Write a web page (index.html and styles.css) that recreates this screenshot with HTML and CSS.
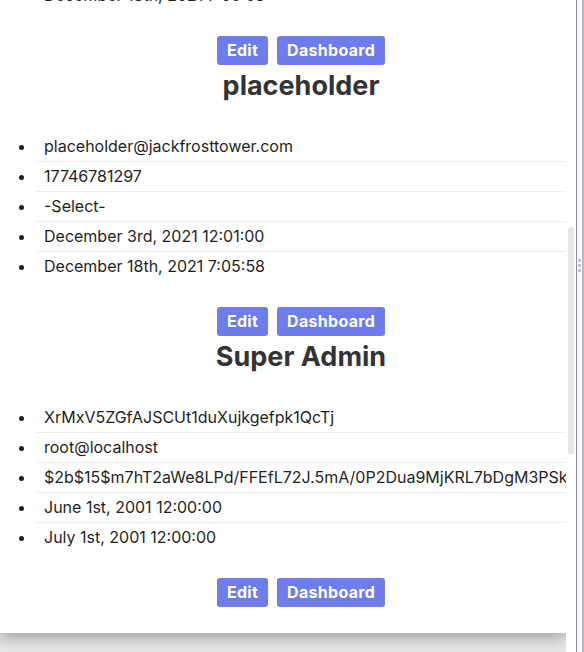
FILE: index.html
```html
<!DOCTYPE html>
<html lang="en">
<head>
<meta charset="utf-8">
<title>Users</title>
<link rel="stylesheet" href="styles.css">
</head>
<body>
<div class="viewer">
  <div class="frame" id="frame">
    <section class="card">
      <h1 class="card-title">Users</h1>

      <article class="user">
        <h2 class="user-name">admin</h2>
        <ul class="user-fields">
          <li>admin@jackfrosttower.com</li>
          <li>17746780001</li>
          <li>-Select-</li>
          <li>December 1st, 2021 09:00:00</li>
          <li>December 18th, 2021 6:58:12</li>
        </ul>
        <div class="actions">
          <a class="btn" href="#">Edit</a>
          <a class="btn" href="#">Dashboard</a>
        </div>
      </article>

      <article class="user">
        <h2 class="user-name">guest</h2>
        <ul class="user-fields">
          <li>guest@jackfrosttower.com</li>
          <li>17746781114</li>
          <li>-Select-</li>
          <li>December 2nd, 2021 10:15:00</li>
          <li>December 18th, 2021 7:05:58</li>
        </ul>
        <div class="actions">
          <a class="btn" href="#">Edit</a>
          <a class="btn" href="#">Dashboard</a>
        </div>
      </article>

      <article class="user" id="target">
        <h2 class="user-name">placeholder</h2>
        <ul class="user-fields">
          <li>placeholder@jackfrosttower.com</li>
          <li>17746781297</li>
          <li>-Select-</li>
          <li>December 3rd, 2021 12:01:00</li>
          <li>December 18th, 2021 7:05:58</li>
        </ul>
        <div class="actions">
          <a class="btn" href="#">Edit</a>
          <a class="btn" href="#">Dashboard</a>
        </div>
      </article>

      <article class="user">
        <h2 class="user-name">Super Admin</h2>
        <ul class="user-fields">
          <li>XrMxV5ZGfAJSCUt1duXujkgefpk1QcTj</li>
          <li>root@localhost</li>
          <li>$2b$15$m7hT2aWe8LPd/FFEfL72J.5mA/0P2Dua9MjKRL7bDgM3PSk4qWxZ9a</li>
          <li>June 1st, 2001 12:00:00</li>
          <li>July 1st, 2001 12:00:00</li>
        </ul>
        <div class="actions">
          <a class="btn" href="#">Edit</a>
          <a class="btn" href="#">Dashboard</a>
        </div>
      </article>
    </section>
  </div>
  <div class="scrollbar"><div class="scrollbar-thumb"></div></div>
  <div class="divider"></div>
  <div class="handle"><span></span><span></span><span></span></div>
  <div class="edge"></div>
</div>
<script src="script.js"></script>
</body>
</html>
```
FILE: styles.css
```css
* { box-sizing: border-box; }

html, body {
  margin: 0;
  padding: 0;
  height: 100%;
  background: #ffffff;
  font-family: Inter, "Open Sans", "DejaVu Sans", sans-serif;
}

.viewer {
  display: flex;
  width: 584px;
  height: 652px;
}

.frame {
  flex: 0 0 566px;
  width: 566px;
  height: 652px;
  overflow: hidden;
  background: #e8e8e8;
  padding: 24px 0 589px;
}

.scrollbar {
  flex: 0 0 10px;
  background: #ffffff;
  padding: 227px 2px 0;
}
.scrollbar-thumb {
  height: 227px;
  background: #e6e6e6;
  border-radius: 3px 3px 2px 2px;
}

.divider {
  flex: 0 0 1px;
  background: #8c87a2;
}

.handle {
  flex: 0 0 5px;
  background: #fbfbfb;
  display: flex;
  flex-direction: column;
  align-items: center;
  padding-top: 259px;
  gap: 2px;
}
.handle span {
  width: 3px;
  height: 3px;
  background: #bdbdbd;
  border-radius: 1px;
}

.edge {
  flex: 0 0 2px;
  background: #bab7bb;
}

.card {
  background: #ffffff;
  padding: 24px 0 26px 36px;
  box-shadow: 0 4px 16px rgba(0, 0, 0, 0.35);
}

.card-title {
  margin: 0 0 92px;
  font-size: 28px;
  line-height: 40px;
  text-align: center;
  color: #333333;
}

.user + .user {
  margin-top: 5px;
}

.user-name {
  margin: 0;
  font-size: 27px;
  line-height: 32px;
  font-weight: 700;
  color: #333333;
  text-align: center;
}

.user-fields {
  margin: 30px 0 26px;
  padding: 0;
  list-style: disc outside;
  color: #1f1f1f;
  font-size: 16px;
}

.user-fields li {
  line-height: 29px;
  padding-left: 8px;
  white-space: nowrap;
  border-bottom: 1px solid #ededed;
}
.user-fields li:last-child {
  border-bottom: none;
}

.actions {
  display: flex;
  justify-content: center;
  gap: 9px;
}

.btn {
  display: block;
  height: 29px;
  line-height: 29px;
  padding: 0 10px;
  background: #6e7cee;
  color: #ffffff;
  font-size: 16px;
  font-weight: 700;
  letter-spacing: 0.3px;
  text-decoration: none;
  border-radius: 3px;
}
```
FILE: script.js
```js
(function () {
  var frame = document.getElementById('frame');
  var target = document.getElementById('target');
  var delta = target.getBoundingClientRect().top - frame.getBoundingClientRect().top - 70;
  frame.scrollTop = frame.scrollTop + delta;
})();
```
